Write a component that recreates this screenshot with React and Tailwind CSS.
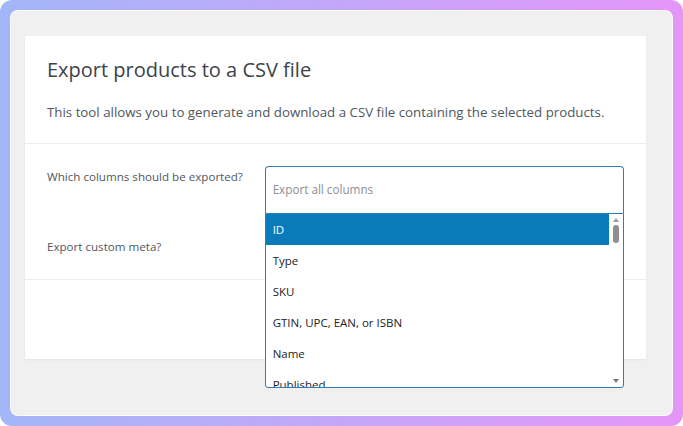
import { useState } from "react";

const COLUMNS = ["ID", "Type", "SKU", "GTIN, UPC, EAN, or ISBN", "Name", "Published"];

const FONT = { fontFamily: '"Open Sans", "Noto Sans", sans-serif' };

function ColumnPicker() {
    const [active] = useState(0);

    return (
        <div className="relative w-[360px]">
            {/* Input */}
            <div className="flex h-[47px] items-center rounded-t-[4px] border border-b-0 border-[#2f7db3] bg-white px-[7px] text-[11.7px] text-[#8c8f94]">
                Export all columns
            </div>

            {/* Open list */}
            <div className="absolute left-0 right-0 top-[47px] z-10 flex h-[175px] overflow-hidden rounded-b-[3px] border border-[#2f7db3] bg-white">
                <ul className="flex-1">
                    {COLUMNS.map((col, i) => (
                        <li
                            key={col}
                            className={`flex h-[31px] items-center px-[7px] text-[11.5px] font-medium ${
                                i === active ? "bg-[#0a7bba] text-white" : "text-[#1d2327]"
                            }`}
                        >
                            {col}
                        </li>
                    ))}
                </ul>
                {/* Scrollbar */}
                <div className="flex w-[14px] flex-col items-center justify-between py-[4px]">
                    <div className="flex flex-col items-center gap-[3px]">
                        <div className="h-0 w-0 border-x-[3px] border-b-[4px] border-x-transparent border-b-[#9a9a9a]" />
                        <div className="h-[18px] w-[6px] rounded-full bg-[#8f8f8f]" />
                    </div>
                    <div className="h-0 w-0 border-x-[3px] border-t-[4px] border-x-transparent border-t-[#7a7a7a]" />
                </div>
            </div>
        </div>
    );
}

export default function App() {
    return (
        <div className="h-[426px] w-[683px] bg-white" style={FONT}>
            <div className="h-full w-full rounded-[12px] bg-gradient-to-r from-[#a2b6f8] via-[#c3a7f7] to-[#e596f8] p-[10px]">
                <div className="h-full rounded-[8px] border border-white/80 bg-[#f0f0f1] px-[14px] pt-[25px]">
                    {/* Card */}
                    <div className="flex h-[323px] w-[621px] flex-col bg-white shadow-[0_1px_2px_rgba(0,0,0,0.05)]">
                        {/* Header */}
                        <div className="h-[108px] border-b border-[#ececec] px-[22px] pt-[20px]">
                            <h1 className="text-[20px] leading-[28px] text-[#3c434a]">
                                Export products to a CSV file
                            </h1>
                            <p className="mt-[18px] text-[13.3px] leading-[20px] text-[#50575e]">
                                This tool allows you to generate and download a CSV file containing the selected products.
                            </p>
                        </div>

                        {/* Form */}
                        <div className="h-[136px] border-b border-[#ececec] px-[22px] pt-[22px]">
                            <div className="flex">
                                <label className="w-[218px] pt-[1px] text-[11.6px] leading-[20px] text-[#50575e]">
                                    Which columns should be exported?
                                </label>
                                <ColumnPicker />
                            </div>
                            <div className="mt-[24px] text-[11.6px] leading-[20px] text-[#50575e]">
                                Export custom meta?
                            </div>
                        </div>

                        <div className="flex-1" />
                    </div>
                </div>
            </div>
        </div>
    );
}
